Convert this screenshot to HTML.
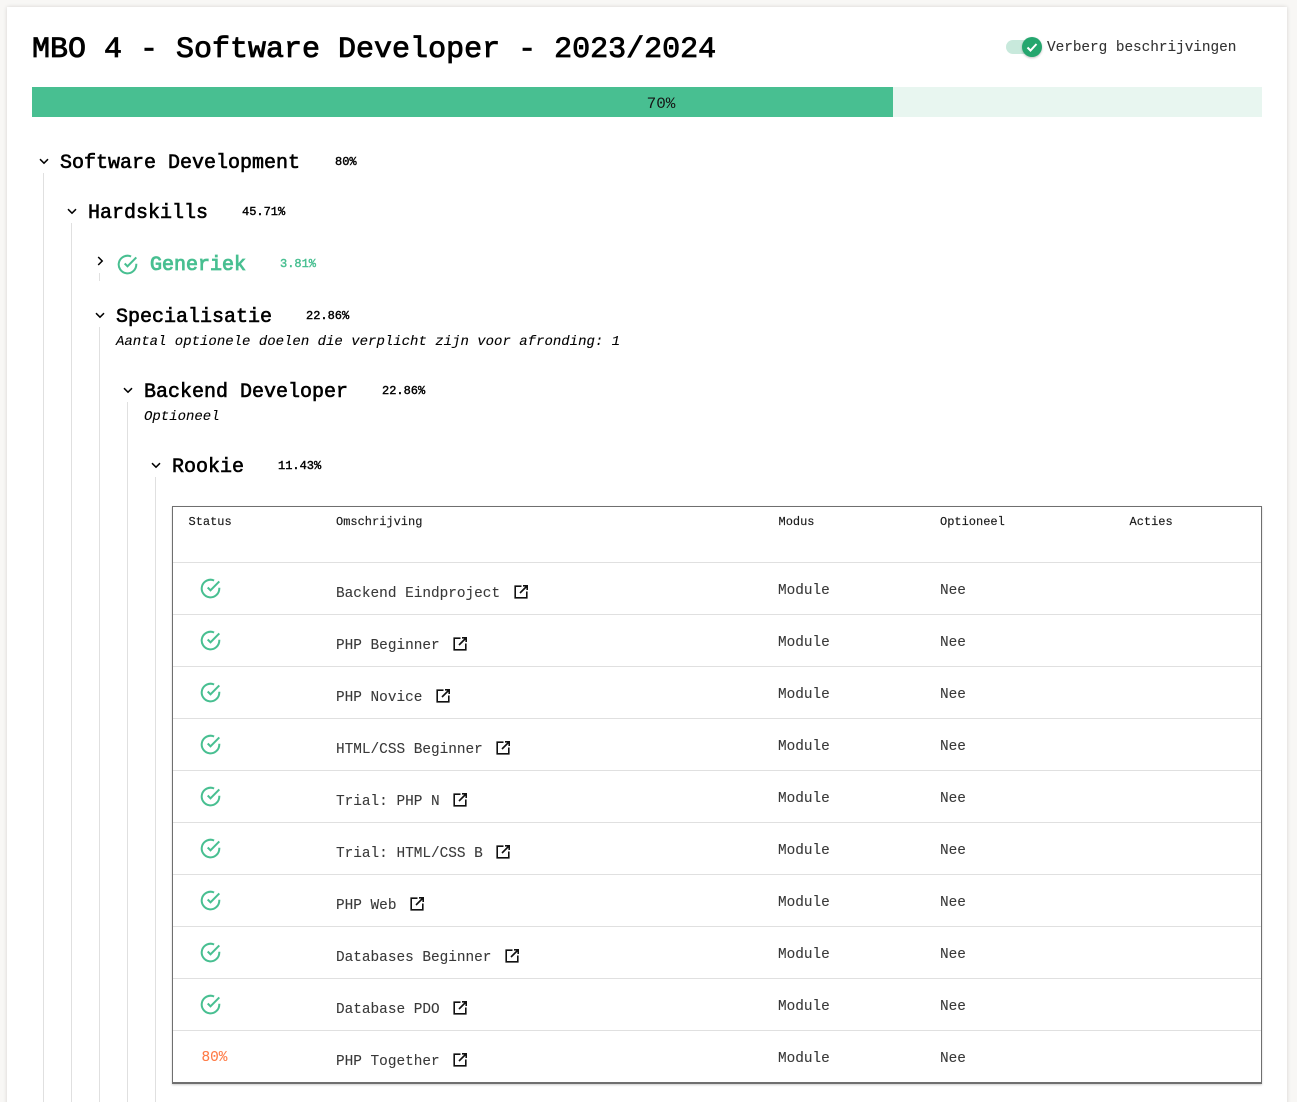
<!DOCTYPE html>
<html lang="nl"><head><meta charset="utf-8"><title>MBO 4 - Software Developer</title>
<style>
html,body{margin:0;padding:0;width:1297px;height:1102px;overflow:hidden;background:#f8f7f5}
body{position:relative;font-family:"Liberation Mono",monospace;color:#000}
#card{position:absolute;left:7px;top:7px;width:1280px;height:1110px;background:#fff;box-shadow:0 0 4px rgba(0,0,0,.14)}
.t{position:absolute;white-space:pre;line-height:20px;height:20px}
.h{font-size:20px;font-weight:400;-webkit-text-stroke:.6px currentColor}
.p{font-size:12px;font-weight:400;-webkit-text-stroke:.4px currentColor}
.i{font-size:14px;font-style:italic;-webkit-text-stroke:.1px currentColor}
.th{font-size:12px;color:#1a1a1a;-webkit-text-stroke:.15px currentColor}
.td{font-size:14.4px;color:#393939;-webkit-text-stroke:.1px currentColor}
.l{position:absolute;width:1px;background:#e0e0e0}
.r{position:absolute;left:173px;width:1088px;height:1px;background:#e0e0e0}
svg{position:absolute;overflow:visible}
.g{color:#48bf91}
</style></head><body>
<div id="card"></div>

<div class="t" style="left:32px;top:35px;font-size:30px;line-height:30px;height:30px;-webkit-text-stroke:.85px #000">MBO 4 - Software Developer - 2023/2024</div>

<div style="position:absolute;left:1006px;top:40px;width:26px;height:14px;border-radius:7px;background:#c8e9dc"></div>
<div style="position:absolute;left:1022px;top:37px;width:20px;height:20px;border-radius:50%;background:#24a66e;box-shadow:0 1px 2px rgba(0,0,0,.25)"></div>
<svg style="left:1022px;top:37px" width="20" height="20" viewBox="0 0 20 20"><path d="M5.5 10.5l3 3 6-6.5" fill="none" stroke="#fff" stroke-width="2"/></svg>
<div class="t td" style="left:1047px;top:38px;color:#333;letter-spacing:-.03px">Verberg beschrijvingen</div>

<div style="position:absolute;left:32px;top:87px;width:1230px;height:30px;background:#e8f6f0"></div>
<div style="position:absolute;left:32px;top:87px;width:861px;height:30px;background:#48bf91"></div>
<div class="t" style="left:32px;width:1258px;text-align:center;top:94px;font-size:16px;color:#161616">70%</div>

<div class="l" style="left:43px;top:173px;height:929px"></div>
<div class="l" style="left:71px;top:223px;height:879px"></div>
<div class="l" style="left:99px;top:273px;height:8px"></div>
<div class="l" style="left:99px;top:327px;height:775px"></div>
<div class="l" style="left:127px;top:402px;height:700px"></div>
<div class="l" style="left:155px;top:477px;height:625px"></div>

<svg style="left:39px;top:158px" width="10" height="7" viewBox="0 0 10 7"><path d="M1 1.2l4 4 4-4" fill="none" stroke="#000" stroke-width="1.5"/></svg>
<div class="t h" style="left:60px;top:154px">Software Development</div>
<div class="t p" style="left:335px;top:152px">80%</div>

<svg style="left:67px;top:208px" width="10" height="7" viewBox="0 0 10 7"><path d="M1 1.2l4 4 4-4" fill="none" stroke="#000" stroke-width="1.5"/></svg>
<div class="t h" style="left:88px;top:204px">Hardskills</div>
<div class="t p" style="left:242px;top:202px">45.71%</div>

<svg style="left:97px;top:256px" width="7" height="10" viewBox="0 0 7 10"><path d="M1.2 1l4 4-4 4" fill="none" stroke="#000" stroke-width="1.5"/></svg>
<svg style="left:117px;top:253.5px" width="21" height="21" viewBox="0 0 21 21"><path d="M19.3 9.7v.8a8.8 8.8 0 1 1-5.2-8" fill="none" stroke="#48bf91" stroke-width="2"/><path d="M19.3 3.4l-8.8 8.9-2.8-2.8" fill="none" stroke="#48bf91" stroke-width="2"/></svg>
<div class="t h g" style="left:150px;top:256px;-webkit-text-stroke-width:.85px">Generiek</div>
<div class="t p g" style="left:280px;top:254px">3.81%</div>

<svg style="left:95px;top:312px" width="10" height="7" viewBox="0 0 10 7"><path d="M1 1.2l4 4 4-4" fill="none" stroke="#000" stroke-width="1.5"/></svg>
<div class="t h" style="left:116px;top:308px">Specialisatie</div>
<div class="t p" style="left:306px;top:306px">22.86%</div>
<div class="t i" style="left:116px;top:332px">Aantal optionele doelen die verplicht zijn voor afronding: 1</div>

<svg style="left:123px;top:387px" width="10" height="7" viewBox="0 0 10 7"><path d="M1 1.2l4 4 4-4" fill="none" stroke="#000" stroke-width="1.5"/></svg>
<div class="t h" style="left:144px;top:383px">Backend Developer</div>
<div class="t p" style="left:382px;top:381px">22.86%</div>
<div class="t i" style="left:144px;top:407px">Optioneel</div>

<svg style="left:151px;top:462px" width="10" height="7" viewBox="0 0 10 7"><path d="M1 1.2l4 4 4-4" fill="none" stroke="#000" stroke-width="1.5"/></svg>
<div class="t h" style="left:172px;top:458px">Rookie</div>
<div class="t p" style="left:278px;top:456px">11.43%</div>

<div style="position:absolute;left:172px;top:506px;width:1088px;height:575px;border:1px solid #6f6f6f;border-bottom-width:2px;box-shadow:0 1px 2px rgba(0,0,0,.2)"></div>
<div class="t th" style="left:188.5px;top:511.5px">Status</div>
<div class="t th" style="left:336px;top:511.5px">Omschrijving</div>
<div class="t th" style="left:778.5px;top:511.5px">Modus</div>
<div class="t th" style="left:940px;top:511.5px">Optioneel</div>
<div class="t th" style="left:1129.5px;top:511.5px">Acties</div>

<div class="r" style="top:562px"></div>
<svg style="left:200px;top:577.5px" width="21" height="21" viewBox="0 0 21 21"><path d="M19.3 9.7v.8a8.8 8.8 0 1 1-5.2-8" fill="none" stroke="#48bf91" stroke-width="2"/><path d="M19.3 3.4l-8.8 8.9-2.8-2.8" fill="none" stroke="#48bf91" stroke-width="2"/></svg>
<div class="t td" style="left:336px;top:584px">Backend Eindproject</div>
<svg style="left:514px;top:585px" width="14" height="14" viewBox="0 0 14 14"><path d="M7.5 1.2H1.2v11.6h11.6V6.5M9 .8h4.2V5M13 1L6 8" fill="none" stroke="#111" stroke-width="1.6"/></svg>
<div class="t td" style="left:778px;top:581px">Module</div>
<div class="t td" style="left:940px;top:581px">Nee</div>

<div class="r" style="top:614px"></div>
<svg style="left:200px;top:629.5px" width="21" height="21" viewBox="0 0 21 21"><path d="M19.3 9.7v.8a8.8 8.8 0 1 1-5.2-8" fill="none" stroke="#48bf91" stroke-width="2"/><path d="M19.3 3.4l-8.8 8.9-2.8-2.8" fill="none" stroke="#48bf91" stroke-width="2"/></svg>
<div class="t td" style="left:336px;top:636px">PHP Beginner</div>
<svg style="left:453px;top:637px" width="14" height="14" viewBox="0 0 14 14"><path d="M7.5 1.2H1.2v11.6h11.6V6.5M9 .8h4.2V5M13 1L6 8" fill="none" stroke="#111" stroke-width="1.6"/></svg>
<div class="t td" style="left:778px;top:633px">Module</div>
<div class="t td" style="left:940px;top:633px">Nee</div>

<div class="r" style="top:666px"></div>
<svg style="left:200px;top:681.5px" width="21" height="21" viewBox="0 0 21 21"><path d="M19.3 9.7v.8a8.8 8.8 0 1 1-5.2-8" fill="none" stroke="#48bf91" stroke-width="2"/><path d="M19.3 3.4l-8.8 8.9-2.8-2.8" fill="none" stroke="#48bf91" stroke-width="2"/></svg>
<div class="t td" style="left:336px;top:688px">PHP Novice</div>
<svg style="left:436px;top:689px" width="14" height="14" viewBox="0 0 14 14"><path d="M7.5 1.2H1.2v11.6h11.6V6.5M9 .8h4.2V5M13 1L6 8" fill="none" stroke="#111" stroke-width="1.6"/></svg>
<div class="t td" style="left:778px;top:685px">Module</div>
<div class="t td" style="left:940px;top:685px">Nee</div>

<div class="r" style="top:718px"></div>
<svg style="left:200px;top:733.5px" width="21" height="21" viewBox="0 0 21 21"><path d="M19.3 9.7v.8a8.8 8.8 0 1 1-5.2-8" fill="none" stroke="#48bf91" stroke-width="2"/><path d="M19.3 3.4l-8.8 8.9-2.8-2.8" fill="none" stroke="#48bf91" stroke-width="2"/></svg>
<div class="t td" style="left:336px;top:740px">HTML/CSS Beginner</div>
<svg style="left:496px;top:741px" width="14" height="14" viewBox="0 0 14 14"><path d="M7.5 1.2H1.2v11.6h11.6V6.5M9 .8h4.2V5M13 1L6 8" fill="none" stroke="#111" stroke-width="1.6"/></svg>
<div class="t td" style="left:778px;top:737px">Module</div>
<div class="t td" style="left:940px;top:737px">Nee</div>

<div class="r" style="top:770px"></div>
<svg style="left:200px;top:785.5px" width="21" height="21" viewBox="0 0 21 21"><path d="M19.3 9.7v.8a8.8 8.8 0 1 1-5.2-8" fill="none" stroke="#48bf91" stroke-width="2"/><path d="M19.3 3.4l-8.8 8.9-2.8-2.8" fill="none" stroke="#48bf91" stroke-width="2"/></svg>
<div class="t td" style="left:336px;top:792px">Trial: PHP N</div>
<svg style="left:453px;top:793px" width="14" height="14" viewBox="0 0 14 14"><path d="M7.5 1.2H1.2v11.6h11.6V6.5M9 .8h4.2V5M13 1L6 8" fill="none" stroke="#111" stroke-width="1.6"/></svg>
<div class="t td" style="left:778px;top:789px">Module</div>
<div class="t td" style="left:940px;top:789px">Nee</div>

<div class="r" style="top:822px"></div>
<svg style="left:200px;top:837.5px" width="21" height="21" viewBox="0 0 21 21"><path d="M19.3 9.7v.8a8.8 8.8 0 1 1-5.2-8" fill="none" stroke="#48bf91" stroke-width="2"/><path d="M19.3 3.4l-8.8 8.9-2.8-2.8" fill="none" stroke="#48bf91" stroke-width="2"/></svg>
<div class="t td" style="left:336px;top:844px">Trial: HTML/CSS B</div>
<svg style="left:496px;top:845px" width="14" height="14" viewBox="0 0 14 14"><path d="M7.5 1.2H1.2v11.6h11.6V6.5M9 .8h4.2V5M13 1L6 8" fill="none" stroke="#111" stroke-width="1.6"/></svg>
<div class="t td" style="left:778px;top:841px">Module</div>
<div class="t td" style="left:940px;top:841px">Nee</div>

<div class="r" style="top:874px"></div>
<svg style="left:200px;top:889.5px" width="21" height="21" viewBox="0 0 21 21"><path d="M19.3 9.7v.8a8.8 8.8 0 1 1-5.2-8" fill="none" stroke="#48bf91" stroke-width="2"/><path d="M19.3 3.4l-8.8 8.9-2.8-2.8" fill="none" stroke="#48bf91" stroke-width="2"/></svg>
<div class="t td" style="left:336px;top:896px">PHP Web</div>
<svg style="left:410px;top:897px" width="14" height="14" viewBox="0 0 14 14"><path d="M7.5 1.2H1.2v11.6h11.6V6.5M9 .8h4.2V5M13 1L6 8" fill="none" stroke="#111" stroke-width="1.6"/></svg>
<div class="t td" style="left:778px;top:893px">Module</div>
<div class="t td" style="left:940px;top:893px">Nee</div>

<div class="r" style="top:926px"></div>
<svg style="left:200px;top:941.5px" width="21" height="21" viewBox="0 0 21 21"><path d="M19.3 9.7v.8a8.8 8.8 0 1 1-5.2-8" fill="none" stroke="#48bf91" stroke-width="2"/><path d="M19.3 3.4l-8.8 8.9-2.8-2.8" fill="none" stroke="#48bf91" stroke-width="2"/></svg>
<div class="t td" style="left:336px;top:948px">Databases Beginner</div>
<svg style="left:505px;top:949px" width="14" height="14" viewBox="0 0 14 14"><path d="M7.5 1.2H1.2v11.6h11.6V6.5M9 .8h4.2V5M13 1L6 8" fill="none" stroke="#111" stroke-width="1.6"/></svg>
<div class="t td" style="left:778px;top:945px">Module</div>
<div class="t td" style="left:940px;top:945px">Nee</div>

<div class="r" style="top:978px"></div>
<svg style="left:200px;top:993.5px" width="21" height="21" viewBox="0 0 21 21"><path d="M19.3 9.7v.8a8.8 8.8 0 1 1-5.2-8" fill="none" stroke="#48bf91" stroke-width="2"/><path d="M19.3 3.4l-8.8 8.9-2.8-2.8" fill="none" stroke="#48bf91" stroke-width="2"/></svg>
<div class="t td" style="left:336px;top:1000px">Database PDO</div>
<svg style="left:453px;top:1001px" width="14" height="14" viewBox="0 0 14 14"><path d="M7.5 1.2H1.2v11.6h11.6V6.5M9 .8h4.2V5M13 1L6 8" fill="none" stroke="#111" stroke-width="1.6"/></svg>
<div class="t td" style="left:778px;top:997px">Module</div>
<div class="t td" style="left:940px;top:997px">Nee</div>

<div class="r" style="top:1030px"></div>
<div class="t td" style="left:201.5px;top:1048px;color:#ff7a45;font-size:14.4px">80%</div>
<div class="t td" style="left:336px;top:1052px">PHP Together</div>
<svg style="left:453px;top:1053px" width="14" height="14" viewBox="0 0 14 14"><path d="M7.5 1.2H1.2v11.6h11.6V6.5M9 .8h4.2V5M13 1L6 8" fill="none" stroke="#111" stroke-width="1.6"/></svg>
<div class="t td" style="left:778px;top:1049px">Module</div>
<div class="t td" style="left:940px;top:1049px">Nee</div>
</body></html>
